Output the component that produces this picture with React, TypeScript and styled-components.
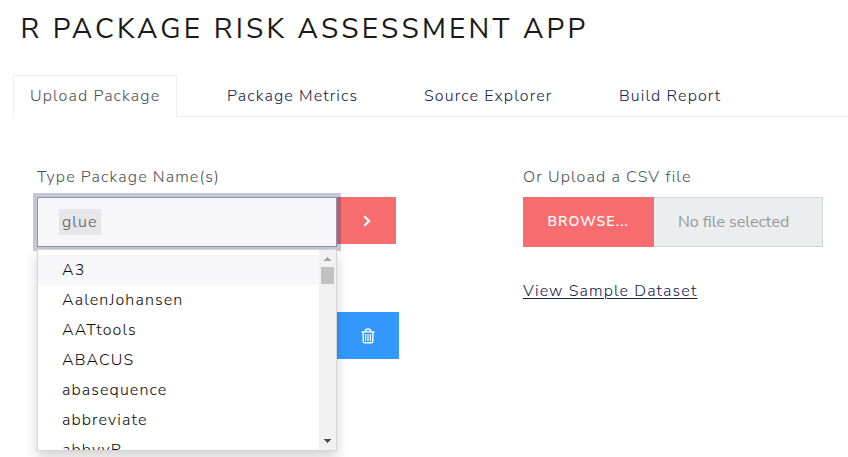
import React from "react";
import styled, { createGlobalStyle } from "styled-components";

const GlobalStyle = createGlobalStyle`
  *, *::before, *::after { box-sizing: border-box; }
  html, body { margin: 0; background: #fff; overflow: hidden; }
  body { font-family: "Nunito Sans", Nunito, Lato, sans-serif; font-size: 16px; font-weight: 300; color: #55595c; }
`;

const Page = styled.div`
  height: 457px;
  overflow: hidden;
  background: #fff;
`;

const Fit = styled.span<{ $ls?: number }>`
  letter-spacing: ${(p) => p.$ls ?? 1.12}px;
  white-space: nowrap;
`;

const Title = styled.h1`
  margin: 0;
  height: 75px;
  padding: 12px 0 0 20.5px;
  font-size: 28px;
  line-height: 34px;
  font-weight: 400;
  color: #1a1a1a;
`;

const Tabs = styled.nav`
  display: flex;
  gap: 33px;
  height: 42px;
  margin-left: 13px;
  box-shadow: inset 0 -1px 0 #eceeef;
`;

const Tab = styled.a<{ $w: number; $active?: boolean }>`
  flex: none;
  width: ${(p) => p.$w}px;
  padding: 9px 0 0 16px;
  line-height: 22px;
  border: 1px solid ${(p) => (p.$active ? "#eceeef" : "transparent")};
  border-bottom: 0;
  background: ${(p) => (p.$active ? "#fff" : "transparent")};
  color: ${(p) => (p.$active ? "#4d5154" : "#17214f")};
`;

const Content = styled.main`
  display: grid;
  grid-template-columns: 486px 300px;
  padding: 49px 0 0 37px;
`;

const Label = styled.div`
  height: 31px;
  line-height: 22px;
  color: #4d5154;
`;

const Row = styled.div`
  display: flex;
  align-items: flex-start;
`;

const Selectize = styled.div`
  position: relative;
  z-index: 1;
  width: 300px;
  height: 50px;
`;

const Input = styled.div`
  display: flex;
  align-items: center;
  height: 50px;
  padding-left: 21px;
  border: 1px solid #8d93b3;
  background: #f7f7f9;
  box-shadow: 0 0 0 4px rgba(26, 32, 87, 0.25);
`;

const Token = styled.span`
  height: 26px;
  width: 42px;
  padding-left: 3px;
  line-height: 27px;
  background: #e6e6e8;
`;

const Dropdown = styled.div`
  position: absolute;
  top: 52px;
  left: 0;
  display: flex;
  width: 300px;
  height: 202px;
  border: 1px solid #d5d5d5;
  background: #fff;
  box-shadow: 0 6px 12px rgba(0, 0, 0, 0.175);
`;

const Options = styled.div`
  flex: 1;
  padding-top: 5px;
  overflow: hidden;
`;

const Option = styled.div<{ $active?: boolean }>`
  height: 30px;
  padding-left: 24px;
  line-height: 30px;
  color: #0c0c0c;
  background: ${(p) => (p.$active ? "#f7f7f9" : "#fff")};
`;

const Scrollbar = styled.div`
  display: flex;
  flex-direction: column;
  align-items: center;
  justify-content: space-between;
  width: 17px;
  background: #f1f1f1;
  svg { display: block; }
`;

const Thumb = styled.div`
  width: 13px;
  height: 17px;
  margin-bottom: auto;
  background: #c1c1c1;
`;

const IconButton = styled.button<{ $w: number; $bg: string }>`
  display: flex;
  align-items: center;
  justify-content: center;
  width: ${(p) => p.$w}px;
  height: 47px;
  padding: 0;
  border: 0;
  background: ${(p) => p.$bg};
`;

const DeleteRow = styled(Row)`
  padding: 65px 0 0 300px;
`;

const Browse = styled.button`
  width: 131px;
  height: 50px;
  padding: 0 0 0 24.5px;
  border: 0;
  background: #f76c6e;
  color: #fff;
  font: 600 14px/20px "Nunito Sans", Nunito, Lato, sans-serif;
  text-align: left;
`;

const FileName = styled.div`
  width: 169px;
  height: 50px;
  padding-left: 24px;
  line-height: 48px;
  border: 1px solid #ced4da;
  border-left: 0;
  background: #ecedef;
  color: #919aa1;
  font-weight: 400;
`;

const SampleLink = styled.a`
  display: block;
  width: 175px;
  height: 20px;
  margin-top: 33px;
  line-height: 22px;
  color: #17214f;
  text-decoration: underline;
  text-decoration-thickness: 1px;
  text-underline-offset: 2px;
`;

const tabs = [
  { text: "Upload Package", w: 164, active: true },
  { text: "Package Metrics", w: 164 },
  { text: "Source Explorer", w: 162 },
  { text: "Build Report", w: 136 },
];

const options = [
  "A3",
  "AalenJohansen",
  "AATtools",
  "ABACUS",
  "abasequence",
  "abbreviate",
  "abbyyR",
];

export default function App() {
  return (
    <Page>
      <GlobalStyle />
      <Title><Fit $ls={3.2}>R PACKAGE RISK ASSESSMENT APP</Fit></Title>
      <Tabs>
        {tabs.map((t) => (
          <Tab key={t.text} $w={t.w} $active={t.active}><Fit>{t.text}</Fit></Tab>
        ))}
      </Tabs>
      <Content>
        <section>
          <Label><Fit>Type Package Name(s)</Fit></Label>
          <Row>
            <Selectize>
              <Input><Token><Fit>glue</Fit></Token></Input>
              <Dropdown>
                <Options>
                  {options.map((name, i) => (
                    <Option key={name} $active={i === 0}><Fit>{name}</Fit></Option>
                  ))}
                </Options>
                <Scrollbar>
                  <svg width="17" height="17"><path d="M5 11h7v-1h-1v-1h-1v-1h-1v-1h-1v1h-1v1h-1v1h-1z" fill="#a3a3a3" /></svg>
                  <Thumb />
                  <svg width="17" height="17"><path d="M5 6h7v1h-1v1h-1v1h-1v1h-1v-1h-1v-1h-1v-1h-1z" fill="#505050" /></svg>
                </Scrollbar>
              </Dropdown>
            </Selectize>
            <IconButton $w={59} $bg="#f76c6e" aria-label="Add">
              <svg width="14" height="14" fill="none" stroke="#fff" strokeWidth="2.3"><path d="M4.3 2.2 9 7l-4.7 4.8" /></svg>
            </IconButton>
          </Row>
          <DeleteRow>
            <IconButton $w={62} $bg="#3399ff" aria-label="Delete">
              <svg width="14" height="16" fill="none" stroke="#fff" strokeWidth="1.4">
                <path d="M.5 3.9h13M4 3.7l.8-1.8q.3-.7 1-.7h2.4q.7 0 1 .7l.8 1.8M2.2 4v9.2q0 1.5 1.4 1.5h6.8q1.4 0 1.4-1.5V4" />
                <path d="M4.6 6v7M7 6v7M9.4 6v7" strokeWidth="1.2" />
              </svg>
            </IconButton>
          </DeleteRow>
        </section>
        <section>
          <Label><Fit>Or Upload a CSV file</Fit></Label>
          <Row>
            <Browse><Fit $ls={1.05}>BROWSE...</Fit></Browse>
            <FileName><Fit $ls={0}>No file selected</Fit></FileName>
          </Row>
          <SampleLink><Fit>View Sample Dataset</Fit></SampleLink>
        </section>
      </Content>
    </Page>
  );
}
